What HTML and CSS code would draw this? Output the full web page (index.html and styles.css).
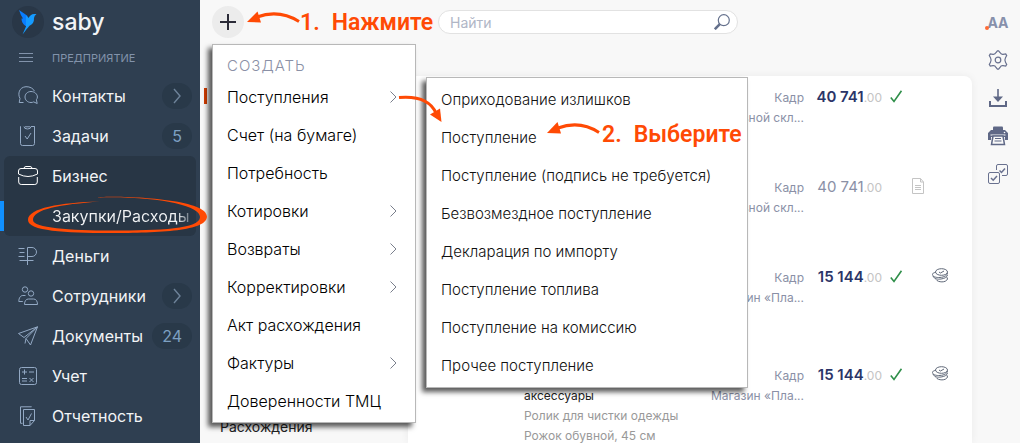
FILE: index.html
```html
<!DOCTYPE html>
<html lang="ru">
<head>
<meta charset="utf-8">
<meta name="viewport" content="width=device-width, initial-scale=1">
<title>Saby — Закупки/Расходы</title>
<link rel="stylesheet" href="styles.css">
</head>
<body>
<div class="app">
  <aside class="sidebar">
    <div class="brand">
      <span class="brand-mark">
        <svg width="32" height="32" viewBox="0 0 32 32" aria-hidden="true"><path d="M7 4 15 9.500 17 13 16 19.500 13.500 20C10.500 18 9.500 15 9.500 12.500L11 12.500Q8.500 9 7 4Z" fill="#0a7dff"/><path d="M14 9.500 16.500 12C18 9 20.500 7 24.500 8.300Q22.300 9.500 22 12C22.300 16 20.500 18.500 17.500 19.700Q15.500 22 10.500 28.500L14 20.500Z" fill="#159bff"/></svg>
      </span>
      <span class="brand-name">saby</span>
    </div>
    <div class="section">
      <button class="burger" type="button" aria-label="Меню"><svg width="14" height="10" viewBox="0 0 14 10"><path d="M0 .5h14M0 4.500h14M0 8.500h14" stroke="#8293ab" fill="none"/></svg></button>
      <span>ПРЕДПРИЯТИЕ</span>
    </div>
    <nav class="nav">
      <a class="nav-item" href="#"><svg class="nav-icon" viewBox="0 0 20 20"><path d="M5.500 16.500H1.200L2 12.500C-.5 8 1 1.200 8 .7c4-.2 7.500 2 8.500 4.500M13 5.500c-3.500 0-6 2.500-6 5.500s2.500 5.500 6 5.500c1 0 2-.2 2.700-.6l3.500 1.600-.8-3.800c.7-.9 1-1.700 1-2.700 0-3-2.900-5.500-6.400-5.500Z"/></svg><span class="nav-text">Контакты</span><span class="badge"><svg width="8" height="16" viewBox="0 0 8 16"><path d="M1 1l6 7-6 7"/></svg></span></a>
      <a class="nav-item" href="#"><svg class="nav-icon" viewBox="0 0 20 20"><path d="M2.500.5v17q0 2 2 2h10q2 0 2-2V.5h-3.500q0 2.500-3.500 2.500T6 .5M7 .8h5M7 10l2.200 3L13 7M2.500.5v3M16.500.5v3"/></svg><span class="nav-text">Задачи</span><span class="badge">5</span></a>
      <div class="nav-group">
        <a class="nav-item active" href="#"><svg class="nav-icon" viewBox="0 0 20 20"><path d="M3 2.500h14q2.500 0 2.500 2.500v3q-9.500 5-19 0V5Q.5 2.500 3 2.500ZM6 2.500q0-2 2-2h4q2 0 2 2M.7 11v5q0 2.500 2.500 2.500h13.600q2.500 0 2.500-2.500v-5"/></svg><span class="nav-text">Бизнес</span></a>
        <a class="nav-item current" href="#"><span class="nav-text">Закупки/Расходы</span></a>
      </div>
      <a class="nav-item" href="#"><svg class="nav-icon" viewBox="0 0 20 20"><path d="M.5 2.500h6M1.500 6.500h5M.5 10.500h6M1.500 14.500h14M9.500 19V1.500h4.500a4.500 4.500 0 0 1 0 9H9.500"/></svg><span class="nav-text">Деньги</span></a>
      <a class="nav-item" href="#"><svg class="nav-icon" viewBox="0 0 20 20"><circle cx="7" cy="3.500" r="2.700"/><circle cx="13" cy="7.500" r="2.700"/><path d="M7.500 9.500H4.800C2.500 9.500.8 12 .8 15.500h4M6.500 18.500c0-3.500 1.500-5.500 4-5.500h5c2.500 0 4 2 4 5.500Z"/></svg><span class="nav-text">Сотрудники</span><span class="badge"><svg width="8" height="16" viewBox="0 0 8 16"><path d="M1 1l6 7-6 7"/></svg></span></a>
      <a class="nav-item" href="#"><svg class="nav-icon" viewBox="0 0 20 20"><path d="M19.500.8.5 7.500l5.500 4ZM19.500.8 8 12.500 12.500 19ZM8 12.500l-1 5"/></svg><span class="nav-text">Документы</span><span class="badge">24</span></a>
      <a class="nav-item" href="#"><svg class="nav-icon" viewBox="0 0 20 20"><rect x="1.500" y="1.500" width="17" height="17" rx="2"/><path d="M4 6h5M6.500 3.500v5M11 6h5M4 12.500h5M4 15h5M11.500 12l4 4M15.500 12l-4 4"/></svg><span class="nav-text">Учет</span></a>
      <a class="nav-item" href="#"><svg class="nav-icon" viewBox="0 0 20 20"><path d="M13.500 1V.8H2.500v16.500h2M5.500 3.500h11v11l-4.500 5H5.500ZM12 19.500v-5h4.500M8 11l2 3 3.500-6.500"/></svg><span class="nav-text">Отчетность</span></a>
    </nav>
  </aside>

  <main class="main">
    <header class="topbar">
      <button class="add" type="button" aria-label="Создать"><svg width="16" height="16" viewBox="0 0 16 16"><path d="M8 0v16M0 8h16" stroke="#2b2b38" stroke-width="2"/></svg></button>
      <div class="search">
        <input type="text" placeholder="Найти" aria-label="Найти">
        <button type="button" aria-label="Искать"><svg width="16" height="16" viewBox="0 0 16 16" fill="none" stroke="#64708c"><circle cx="9.800" cy="6.200" r="5.500" stroke-width="1.200"/><path d="M5.800 10.200.8 15.200" stroke-width="2.600"/></svg></button>
      </div>
    </header>
    <div class="content">
      <section class="folders">
        <span class="row-marker"></span>
        <span class="folder">Расхождения</span>
      </section>
      <section class="card">
        <table class="docs">
          <tbody>
            <tr>
              <td class="goods"></td>
              <td class="place">Кадр<br>Основной скл...</td>
              <td class="sum"><b>40 741</b><small>.00</small></td>
              <td class="state"><svg width="12" height="13" viewBox="0 0 12 13"><path d="M.8 7.500 4 11.500 11.500.8" fill="none" stroke="#2f8f4a" stroke-width="1.600"/></svg></td>
              <td class="kind"></td>
            </tr>
            <tr>
              <td class="goods"></td>
              <td class="place">Кадр<br>Основной скл...</td>
              <td class="sum draft">40 741<small>.00</small></td>
              <td class="state"></td>
              <td class="kind"><svg width="12" height="16" viewBox="0 0 12 16" fill="none" stroke="#c4c4c4"><path d="M.5.5h8l3 3.500v11.500H.5ZM8.500.5V4h3M3 7.500h6M3 9.500h6M3 11.500h6"/></svg></td>
            </tr>
            <tr class="tall">
              <td class="goods"></td>
              <td class="place">Кадр<br>Магазин «Пла...</td>
              <td class="sum"><b>15 144</b><small>.00</small></td>
              <td class="state"><svg width="12" height="13" viewBox="0 0 12 13"><path d="M.8 7.500 4 11.500 11.500.8" fill="none" stroke="#2f8f4a" stroke-width="1.600"/></svg></td>
              <td class="kind paid"><svg width="16" height="15" viewBox="0 0 16 15" fill="none" stroke="#5f6878"><ellipse cx="9.500" cy="4" rx="6" ry="3.300"/><path d="M7 4l1.500 1 3.500-2M.5 6.500c0 2 3 3 6 3 4 0 8.500-1 9-4.500M.5 6.500c0-1 1-2 3-2M1 8c1 3 5 3.500 8 3 4-.5 6-2 6.500-4M4 11.500c2 3 10 3.500 11.500-.5 0-1-.5-1.500-1-2"/></svg></td>
            </tr>
            <tr>
              <td class="goods"><strong>аксессуары</strong><br>Ролик для чистки одежды<br>Рожок обувной, 45 см</td>
              <td class="place">Кадр<br>Магазин «Пла...</td>
              <td class="sum"><b>15 144</b><small>.00</small></td>
              <td class="state"><svg width="12" height="13" viewBox="0 0 12 13"><path d="M.8 7.500 4 11.500 11.500.8" fill="none" stroke="#2f8f4a" stroke-width="1.600"/></svg></td>
              <td class="kind paid"><svg width="16" height="15" viewBox="0 0 16 15" fill="none" stroke="#5f6878"><ellipse cx="9.500" cy="4" rx="6" ry="3.300"/><path d="M7 4l1.500 1 3.500-2M.5 6.500c0 2 3 3 6 3 4 0 8.500-1 9-4.500M.5 6.500c0-1 1-2 3-2M1 8c1 3 5 3.500 8 3 4-.5 6-2 6.500-4M4 11.500c2 3 10 3.500 11.500-.5 0-1-.5-1.500-1-2"/></svg></td>
            </tr>
          </tbody>
        </table>
      </section>
    </div>
  </main>

  <aside class="tools">
    <button type="button" class="font-size" aria-label="Размер шрифта">AA</button>
    <button type="button" aria-label="Настройки"><svg width="20" height="20" viewBox="0 0 20 20" fill="none" stroke="#69718f" stroke-width="1.200"><circle cx="10" cy="10" r="2.800"/><path d="M8 2.600 9.400.8h1.200L12 2.600q1 2 3 1.700l2.700-.4 1 1.700-1.200 2.200q-1.200 2.200 0 4.400l1.200 2.200-1 1.700-2.700-.4q-2-.3-3 1.700l-1.400 1.800H9.400L8 17.400q-1-2-3-1.700l-2.700.4-1-1.700 1.200-2.200q1.200-2.200 0-4.400L1.300 5.600l1-1.700 2.700.4q2 .3 3-1.700Z"/></svg></button>
    <button type="button" aria-label="Скачать"><svg width="20" height="20" viewBox="0 0 20 20"><path d="M10 1v9" stroke="#5f6886" stroke-width="1.600"/><path d="M5 8.500h10L10 14Z" fill="#5f6886"/><path d="M2 13v5h16v-5" fill="none" stroke="#5f6886" stroke-width="2"/></svg></button>
    <button type="button" aria-label="Печать"><svg width="20" height="20" viewBox="0 0 20 20"><path d="M5 1.500q0-1 1-1h8q1 0 1 1V4H5Z" fill="#5f6886"/><path d="M3 4h14l3 3v7h-3v-3H3v3H0V7Z" fill="#5f6886"/><path d="M2.500 9h15" stroke="#f8f8f8"/><path d="M5 10h10l1.500 8.500h-13Z" fill="#f8f8f8" stroke="#5f6886" stroke-width="1.500"/><path d="M7 12.500h6M6.500 15h7" stroke="#5f6886"/><circle cx="16.500" cy="6.500" r=".8" fill="#fff"/></svg></button>
    <button type="button" aria-label="Отметить"><svg width="20" height="20" viewBox="0 0 20 20" fill="none" stroke="#69718f"><rect x=".5" y="8.500" width="11" height="11" rx="1.500"/><path d="M8.500 6V2q0-1.500 1.500-1.500h8q1.500 0 1.500 1.500v8q0 1.500-1.500 1.500h-4"/><path d="M3 14l2.200 2.200L9 12M11.500 6.500l2 2L17 4.500" stroke-width="1.500"/></svg></button>
  </aside>

  <div class="menu create-menu">
    <div class="menu-title">СОЗДАТЬ</div>
    <button type="button">Поступления<svg class="arrow" viewBox="0 0 7 12"><path d="M.5.5 6 6 .5 11.500"/></svg></button>
    <button type="button">Счет (на бумаге)</button>
    <button type="button">Потребность</button>
    <button type="button">Котировки<svg class="arrow" viewBox="0 0 7 12"><path d="M.5.5 6 6 .5 11.500"/></svg></button>
    <button type="button">Возвраты<svg class="arrow" viewBox="0 0 7 12"><path d="M.5.5 6 6 .5 11.500"/></svg></button>
    <button type="button">Корректировки<svg class="arrow" viewBox="0 0 7 12"><path d="M.5.5 6 6 .5 11.500"/></svg></button>
    <button type="button">Акт расхождения</button>
    <button type="button">Фактуры<svg class="arrow" viewBox="0 0 7 12"><path d="M.5.5 6 6 .5 11.500"/></svg></button>
    <button type="button">Доверенности ТМЦ</button>
  </div>
  <div class="menu sub-menu">
    <button type="button">Оприходование излишков</button>
    <button type="button">Поступление</button>
    <button type="button">Поступление (подпись не требуется)</button>
    <button type="button">Безвозмездное поступление</button>
    <button type="button">Декларация по импорту</button>
    <button type="button">Поступление топлива</button>
    <button type="button">Поступление на комиссию</button>
    <button type="button">Прочее поступление</button>
  </div>

  <svg class="marks" width="760" height="260" viewBox="0 0 760 260" aria-hidden="true">
    <g fill="none" stroke="#ff4a05" stroke-width="3">
      <path d="M299 21.500Q279 9 257 17"/>
      <path d="M399 97.500Q428 95 436 113"/>
      <path d="M599 132.500Q580 120 558 128"/>
    </g>
    <g fill="#ff4a05">
      <path d="M247 22 257.500 11.500 261 22.500Z"/>
      <path d="M441.500 122 430 114.500 440 108.500Z"/>
      <path d="M547 133 557.500 122 561 133.500Z"/>
      <path fill-rule="evenodd" d="M98 197.500C98 195.500 207 196 207 216.500C207 231 160 233 110 233C65 233 28 231 28 220C28 208 60 202.500 100 201.500C60 204.500 33 209 33 220C33 228 70 230.500 112 230.500C160 230.500 200 229 200 217C200 206 160 196 98 197.500Z"/>
    </g>
  </svg>
  <p class="note note-first"><span>1.</span><span>Нажмите</span></p>
  <p class="note note-second"><span>2.</span><span>Выберите</span></p>
</div>
</body>
</html>
```
FILE: styles.css
```css
* { box-sizing: border-box; }

body {
  margin: 0;
  background: #f8f8f8;
  color: #111;
  font-family: Inter, "Noto Sans", sans-serif;
  font-size: 16px;
}

button {
  margin: 0;
  padding: 0;
  border: 0;
  background: none;
  color: inherit;
  font: inherit;
  cursor: pointer;
}

svg { display: block; flex: none; }

.app {
  position: relative;
  display: flex;
  height: 100vh;
  overflow: hidden;
}

/* Sidebar */
.sidebar {
  flex: none;
  width: 200px;
  background: #2f3f51;
  color: #f2f4f6;
}

.brand {
  display: flex;
  align-items: center;
  gap: 8px;
  padding: 6px 12px 0;
}

.brand-mark { border-radius: 50%; background: #293747; }
.brand-name { font-size: 23px; font-weight: 500; line-height: 32px; }

.section {
  display: flex;
  align-items: center;
  height: 38px;
  padding: 1px 0 0 19px;
  gap: 19px;
  color: #8293ab;
  font-size: 11px;
}

.nav-item {
  position: relative;
  display: flex;
  align-items: center;
  height: 40px;
  padding: 0 8px 0 18px;
  color: inherit;
  text-decoration: none;
}

.nav-icon {
  width: 20px;
  height: 20px;
  margin-right: 14px;
  fill: none;
  stroke: #93a9c4;
}

.nav-text { flex: 1; white-space: nowrap; }

.badge {
  display: flex;
  align-items: center;
  justify-content: center;
  min-width: 30px;
  height: 26px;
  padding: 0 10px;
  border-radius: 13px;
  background: #293949;
  color: #7da0c2;
}

.badge svg { fill: none; stroke: #6e8399; stroke-width: 1.4; }

.nav-group {
  margin: 0 4px;
  border-radius: 6px;
  background: #283645;
}

.nav-group .nav-item { padding-left: 14px; }
.nav-group .nav-icon { stroke: #fff; }
.nav-group .current { padding-left: 48px; }

.current .nav-text {
  background: linear-gradient(90deg, #f2f4f6 90%, #6b7682);
  background-clip: text;
  color: transparent;
}

.current::before {
  content: "";
  position: absolute;
  top: 5px;
  left: -4px;
  width: 4px;
  height: 30px;
  background: #1090ff;
}

/* Main area */
.main {
  display: flex;
  flex: 1;
  flex-direction: column;
  min-width: 0;
}

.topbar {
  display: flex;
  align-items: center;
  flex: none;
  height: 76px;
  padding: 0 12px 32px;
}

.add {
  display: grid;
  place-items: center;
  width: 32px;
  height: 32px;
  border-radius: 50%;
  background: #ececec;
}

.search {
  display: flex;
  align-items: center;
  width: 300px;
  height: 24px;
  margin-left: 194px;
  padding: 0 7px 0 11px;
  border: 1px solid #e2e2e2;
  border-radius: 12px;
  background: #fff;
}

.search input {
  flex: 1;
  min-width: 0;
  padding: 0;
  border: 0;
  outline: 0;
  background: none;
  font: inherit;
  font-size: 14px;
}

.search input::placeholder { color: #b0b6c6; opacity: 1; }

.content { display: flex; flex: 1; min-height: 0; }

.folders {
  display: flex;
  flex: none;
  flex-direction: column;
  justify-content: space-between;
  width: 208px;
  padding: 12px 4px 6px;
}

.row-marker { width: 3px; height: 16px; background: #d13c00; }
.folder { padding-left: 16px; font-size: 14px; line-height: 20px; color: #222; }

.card {
  flex: 1;
  min-width: 0;
  border-radius: 8px 8px 0 0;
  background: #fff;
  box-shadow: 0 0 8px rgba(0, 0, 0, .06);
}

.docs {
  width: 100%;
  border-collapse: collapse;
  color: #8a90a6;
  font-size: 12px;
  line-height: 20px;
  table-layout: fixed;
}

.docs tr { height: 90px; }
.docs .tall { height: 98px; }
.docs td { padding: 12px 0 0; vertical-align: top; white-space: nowrap; }
.docs .goods { padding: 32px 0 0 116px; color: #999; }
.goods strong { color: #222; font-weight: 400; }
.docs .place { width: 100px; text-align: right; }
.docs .sum { width: 78px; padding-top: 11px; text-align: right; color: #8a90a6; font-size: 15px; }
.sum b { color: #2b3568; font-weight: 600; }
.sum small { color: #c4c4c4; font-size: 12px; }
.docs .state { width: 29px; padding: 14px 0 0 8px; }
.docs .kind { width: 61px; padding-left: 1px; }
.docs .paid { padding-left: 21px; }

/* Right tool strip */
.tools {
  display: flex;
  flex: none;
  flex-direction: column;
  align-items: center;
  gap: 18px;
  width: 48px;
  padding: 12px 0 0 4px;
}

.tools button { min-height: 20px; }

.font-size {
  position: relative;
  color: #8790ab;
  font-size: 14px;
  font-weight: 700;
}

.font-size::before {
  content: "";
  position: absolute;
  bottom: 2px;
  left: -2px;
  width: 4px;
  height: 4px;
  border-radius: 50%;
  background: #ff6b35;
}

/* Pop-up menus */
.menu {
  position: absolute;
  display: flex;
  flex-direction: column;
  border: 1px solid #b8b8b8;
  background: #fff;
  box-shadow: -4px 4px 5px rgba(0, 0, 0, .65);
}

.menu button {
  display: flex;
  align-items: center;
  justify-content: space-between;
  height: 38px;
  padding: 0 18px 0 14px;
  text-align: left;
  white-space: nowrap;
}

.create-menu { top: 44px; left: 212px; width: 204px; padding-bottom: 2px; font-weight: 300; color: #000; }
.sub-menu { top: 77px; left: 426px; width: 322px; padding: 2px 0 3px; font-size: 15px; font-weight: 300; color: #111; }

.menu-title {
  padding: 11px 14px 2px;
  color: #8a90a6;
  font-size: 15px;
  line-height: 20px;
  letter-spacing: 1px;
}

.arrow { width: 7px; height: 12px; fill: none; stroke: #7a7f8c; }

/* Instruction marks */
.marks { position: absolute; top: 0; left: 0; pointer-events: none; }

.note {
  position: absolute;
  display: flex;
  gap: 12px;
  margin: 0;
  color: #ff4a05;
  font-family: Roboto, sans-serif;
  font-size: 23px;
  font-weight: 600;
  line-height: 32px;
  white-space: nowrap;
}

.note-first { top: 7px; left: 300px; }
.note-second { top: 119px; left: 602px; }
```
